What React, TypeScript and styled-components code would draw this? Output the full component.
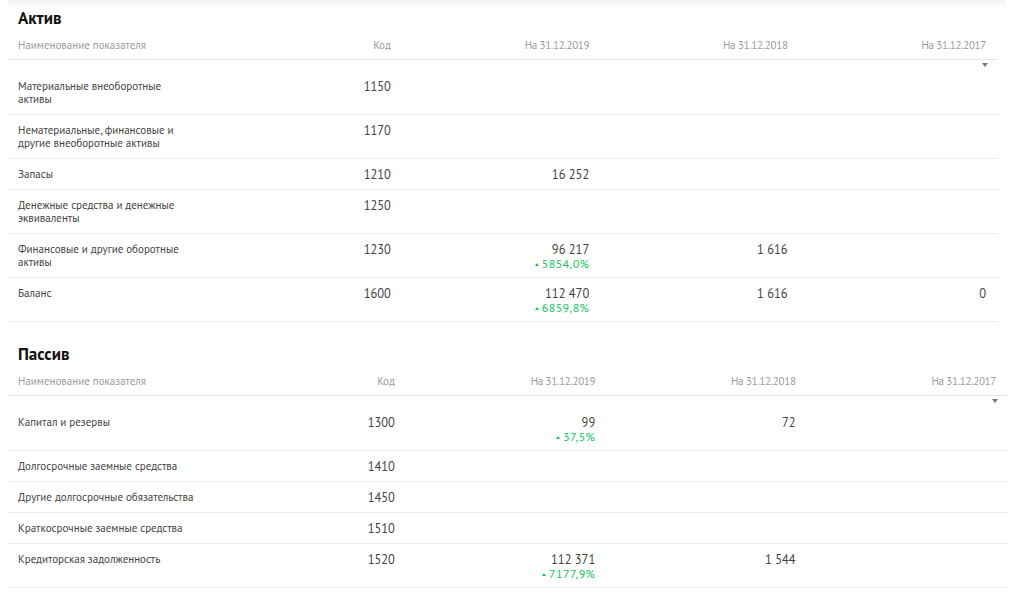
import React from "react";
import styled, { createGlobalStyle } from "styled-components";

const Global = createGlobalStyle`
  html, body { margin: 0; padding: 0; background: #fff; }
  body { font-family: "PT Sans", Roboto, "Noto Sans", sans-serif; color: #444; }
`;

const Page = styled.div`
  padding: 0 0 0 8px;
  width: 1016px;
  box-sizing: border-box;
`;

const TopShade = styled.div`
  width: 997px;
  height: 8px;
  background: linear-gradient(#f2f2f2, #ffffff);
`;

const Section = styled.section<{ $w: number; $top: number }>`
  width: ${(p) => p.$w}px;
  margin-top: ${(p) => p.$top}px;
`;

const Title = styled.h2`
  margin: 0;
  padding-left: 10px;
  font-size: 17px;
  line-height: 20px;
  font-weight: 700;
  color: #111;
`;

const Table = styled.table`
  width: 100%;
  border-collapse: collapse;
  table-layout: fixed;
  font-size: 11px;
`;

const HeadCell = styled.th<{ $left?: boolean; $date?: boolean }>`
  width: 20%;
  padding: 10px 12px 7px ${(p) => (p.$left ? "10px" : "12px")};
  line-height: 14px;
  font-weight: 400;
  color: #9b9b9b;
  text-align: ${(p) => (p.$left ? "left" : "right")};
  letter-spacing: ${(p) => (p.$date ? "-0.3px" : "0")};
  border-bottom: 1px solid #e6e6e6;
  white-space: nowrap;
`;

const CaretCell = styled.td`
  padding: 3px 10px 0 0;
  height: 8px;
  font-size: 0;
  line-height: 0;
  vertical-align: top;
`;

const Caret = styled.span`
  display: block;
  margin-left: auto;
  width: 0;
  height: 0;
  border-left: 3.5px solid transparent;
  border-right: 3.5px solid transparent;
  border-top: 4px solid #7a7a7a;
`;

const Row = styled.tr`
  border-bottom: 1px solid #ececec;
`;

const NameCell = styled.td`
  padding: 9px 12px 8px 10px;
  line-height: 13px;
  vertical-align: top;
  color: #444;
`;

const NumCell = styled.td`
  padding: 8px 12px 6px 12px;
  line-height: 15px;
  vertical-align: top;
  text-align: right;
  color: #444;
  font-size: 12.5px;
`;

const Value = styled.div`
  line-height: 15px;
`;

const Delta = styled.div`
  color: #13c464;
  font-size: 12px;
  line-height: 14px;
  letter-spacing: 0.4px;
  display: flex;
  justify-content: flex-end;
  align-items: center;
  gap: 3px;
`;

const Up = styled.span`
  display: inline-block;
  width: 0;
  height: 0;
  border-left: 2px solid transparent;
  border-right: 2px solid transparent;
  border-bottom: 3px solid #13c464;
`;

type Cell = { v?: string; d?: string } | null;
type RowData = { name: string; code: string; cells: Cell[] };

const aktiv: RowData[] = [
  { name: "Материальные внеоборотные активы", code: "1150", cells: [null, null, null] },
  { name: "Нематериальные, финансовые и другие внеоборотные активы", code: "1170", cells: [null, null, null] },
  { name: "Запасы", code: "1210", cells: [{ v: "16 252" }, null, null] },
  { name: "Денежные средства и денежные эквиваленты", code: "1250", cells: [null, null, null] },
  { name: "Финансовые и другие оборотные активы", code: "1230", cells: [{ v: "96 217", d: "5854,0%" }, { v: "1 616" }, null] },
  { name: "Баланс", code: "1600", cells: [{ v: "112 470", d: "6859,8%" }, { v: "1 616" }, { v: "0" }] },
];

const passiv: RowData[] = [
  { name: "Капитал и резервы", code: "1300", cells: [{ v: "99", d: "37,5%" }, { v: "72" }, null] },
  { name: "Долгосрочные заемные средства", code: "1410", cells: [null, null, null] },
  { name: "Другие долгосрочные обязательства", code: "1450", cells: [null, null, null] },
  { name: "Краткосрочные заемные средства", code: "1510", cells: [null, null, null] },
  { name: "Кредиторская задолженность", code: "1520", cells: [{ v: "112 371", d: "7177,9%" }, { v: "1 544" }, null] },
];

const dates = ["На 31.12.2019", "На 31.12.2018", "На 31.12.2017"];

function BalanceTable({ title, rows, width, top }: { title: string; rows: RowData[]; width: number; top: number }) {
  return (
    <Section $w={width} $top={top}>
      <Title>{title}</Title>
      <Table>
        <thead>
          <tr>
            <HeadCell $left>Наименование показателя</HeadCell>
            <HeadCell>Код</HeadCell>
            {dates.map((d) => (
              <HeadCell key={d} $date>
                {d}
              </HeadCell>
            ))}
          </tr>
        </thead>
        <tbody>
          <tr>
            <CaretCell colSpan={5}>
              <Caret />
            </CaretCell>
          </tr>
          {rows.map((r) => (
            <Row key={r.code}>
              <NameCell>{r.name}</NameCell>
              <NumCell>{r.code}</NumCell>
              {r.cells.map((c, i) => (
                <NumCell key={i}>
                  {c?.v && <Value>{c.v}</Value>}
                  {c?.d && (
                    <Delta>
                      <Up />
                      {c.d}
                    </Delta>
                  )}
                </NumCell>
              ))}
            </Row>
          ))}
        </tbody>
      </Table>
    </Section>
  );
}

export default function App() {
  return (
    <Page>
      <Global />
      <TopShade />
      <BalanceTable title="Актив" rows={aktiv} width={990} top={0} />
      <BalanceTable title="Пассив" rows={passiv} width={1000} top={22} />
    </Page>
  );
}
